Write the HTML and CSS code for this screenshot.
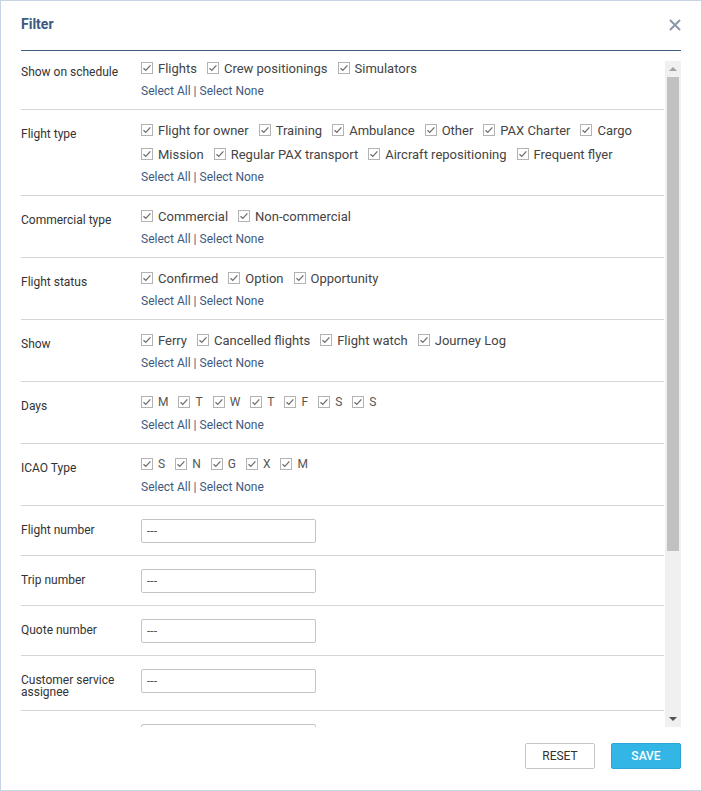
FILE: index.html
```html
<!DOCTYPE html>
<html lang="en">
<head>
  <meta charset="UTF-8">
  <meta name="viewport" content="width=device-width, initial-scale=1.0">
  <title>Filter</title>
  <link rel="stylesheet" href="styles.css">
</head>
<body>
  <div class="dialog">
    <div class="header">
      <h2>Filter</h2>
      <button class="close" aria-label="Close">
        <svg width="12" height="12" viewBox="0 0 12 12"><path d="M1 1L11 11M11 1L1 11" stroke="#8a98aa" stroke-width="2"/></svg>
      </button>
    </div>

    <div class="scroll">
      <div class="rows" id="rows"></div>
      <div class="scrollbar">
        <div class="arrow up"></div>
        <div class="thumb-track"><div class="thumb"></div></div>
        <div class="arrow down"></div>
      </div>
    </div>

    <div class="footer">
      <button class="btn">RESET</button>
      <button class="btn btn-save">SAVE</button>
    </div>
  </div>

  <script>
    const grupos = [
      { label: "Show on schedule", items: ["Flights", "Crew positionings", "Simulators"] },
      { label: "Flight type", items: ["Flight for owner", "Training", "Ambulance", "Other", "PAX Charter", "Cargo", "Mission", "Regular PAX transport", "Aircraft repositioning", "Frequent flyer"] },
      { label: "Commercial type", items: ["Commercial", "Non-commercial"] },
      { label: "Flight status", items: ["Confirmed", "Option", "Opportunity"] },
      { label: "Show", items: ["Ferry", "Cancelled flights", "Flight watch", "Journey Log"] },
      { label: "Days", items: ["M", "T", "W", "T", "F", "S", "S"], small: true },
      { label: "ICAO Type", items: ["S", "N", "G", "X", "M"], small: true }
    ];
    const campos = ["Flight number", "Trip number", "Quote number", "Customer service assignee", ""];

    const check = '<svg class="box" width="12" height="12" viewBox="0 0 12 12">' +
      '<rect x="0.5" y="0.5" width="11" height="11" fill="#fff" stroke="#b3b3b3"/>' +
      '<path d="M2.5 6.2L4.8 8.4L9.4 3.4" fill="none" stroke="#6f6f6f" stroke-width="1.3"/></svg>';

    const rows = document.getElementById("rows");
    let html = "";

    grupos.forEach(g => {
      let items = "";
      g.items.forEach(it => {
        items += `<label class="chk${g.small ? " chk-small" : ""}">${check}<span>${it}</span></label>`;
      });
      html += `
        <div class="row">
          <div class="label">${g.label}</div>
          <div class="field">
            <div class="checks">${items}</div>
            <div class="links"><a href="#">Select All</a> | <a href="#">Select None</a></div>
          </div>
        </div>`;
    });

    campos.forEach(c => {
      html += `
        <div class="row row-input">
          <div class="label">${c}</div>
          <div class="field"><input type="text" placeholder="---"></div>
        </div>`;
    });

    rows.innerHTML = html;
  </script>
</body>
</html>
```

FILE: styles.css
```css
body {
  margin: 0;
  font-family: Roboto, "Liberation Sans", sans-serif;
  background-color: #fff;
}

.dialog {
  width: 702px;
  height: 791px;
  box-sizing: border-box;
  border: 1px solid #c6d4e5;
  padding: 0 20px;
  display: flex;
  flex-direction: column;
  background: #fff;
}

.header {
  height: 50px;
  box-sizing: border-box;
  padding-top: 15px;
  border-bottom: 1px solid #3e5c81;
  display: flex;
  justify-content: space-between;
  align-items: flex-start;
}

.header h2 {
  margin: 0;
  font-size: 14px;
  line-height: 16px;
  font-weight: bold;
  color: #3c5a7e;
}

.close {
  background: none;
  border: none;
  padding: 0;
  margin: 3px 0 0;
  width: 12px;
  height: 12px;
  cursor: pointer;
}

.close svg {
  display: block;
}

.scroll {
  margin-top: 10px;
  height: 666px;
  display: flex;
  overflow: hidden;
}

.rows {
  flex: 1;
  margin-top: -13px;
}

.row {
  display: flex;
  align-items: flex-start;
  padding: 9px 0 7px;
  border-bottom: 1px solid #d6d6d6;
}

.row .label {
  width: 120px;
  flex-shrink: 0;
  font-size: 12px;
  line-height: 12px;
  color: #333;
  padding-top: 9px;
  padding-right: 10px;
  box-sizing: border-box;
}

.field {
  flex: 1;
}

.checks {
  display: flex;
  flex-wrap: wrap;
  row-gap: 2px;
}

.chk {
  display: inline-flex;
  align-items: center;
  height: 22px;
  margin-right: 10px;
  font-size: 13px;
  color: #444;
  cursor: pointer;
}

.chk .box {
  margin-right: 5px;
  flex-shrink: 0;
}

.chk-small {
  font-size: 12px;
  color: #555;
}

.links {
  font-size: 12px;
  line-height: 22px;
  padding-top: 1px;
  color: #3c5a7e;
}

.links a {
  color: #3c5a7e;
  text-decoration: none;
}

.row-input {
  padding: 13px 0 12px;
}

.row-input .label {
  padding-top: 5px;
}

.row-input input {
  display: block;
  width: 175px;
  height: 24px;
  box-sizing: border-box;
  border: 1px solid #c4c4c4;
  border-radius: 2px;
  padding: 0 5px;
  font-family: Roboto, "Liberation Sans", sans-serif;
  font-size: 12px;
  color: #444;
}

.row-input input::placeholder {
  color: #555;
}

.scrollbar {
  width: 16px;
  flex-shrink: 0;
  background: #f0f0f0;
  display: flex;
  flex-direction: column;
  margin-left: 1px;
}

.arrow {
  height: 16px;
  display: flex;
  align-items: center;
  justify-content: center;
}

.arrow::before {
  content: "";
  border-left: 4px solid transparent;
  border-right: 4px solid transparent;
}

.arrow.up::before {
  border-bottom: 4px solid #a3a3a3;
}

.arrow.down::before {
  border-top: 4px solid #505050;
}

.thumb-track {
  flex: 1;
  padding: 0 2px;
}

.thumb {
  height: 474px;
  background: #c1c1c1;
}

.footer {
  margin-top: 16px;
  display: flex;
  justify-content: flex-end;
  gap: 16px;
}

.btn {
  width: 70px;
  height: 26px;
  box-sizing: border-box;
  border: 1px solid #c6c6c6;
  border-radius: 2px;
  background: #fff;
  color: #333;
  font-family: Roboto, "Liberation Sans", sans-serif;
  font-size: 12px;
  cursor: pointer;
}

.btn-save {
  background: #33b6e6;
  border-color: #2aa6d6;
  color: #fff;
  font-weight: 500;
}
```
